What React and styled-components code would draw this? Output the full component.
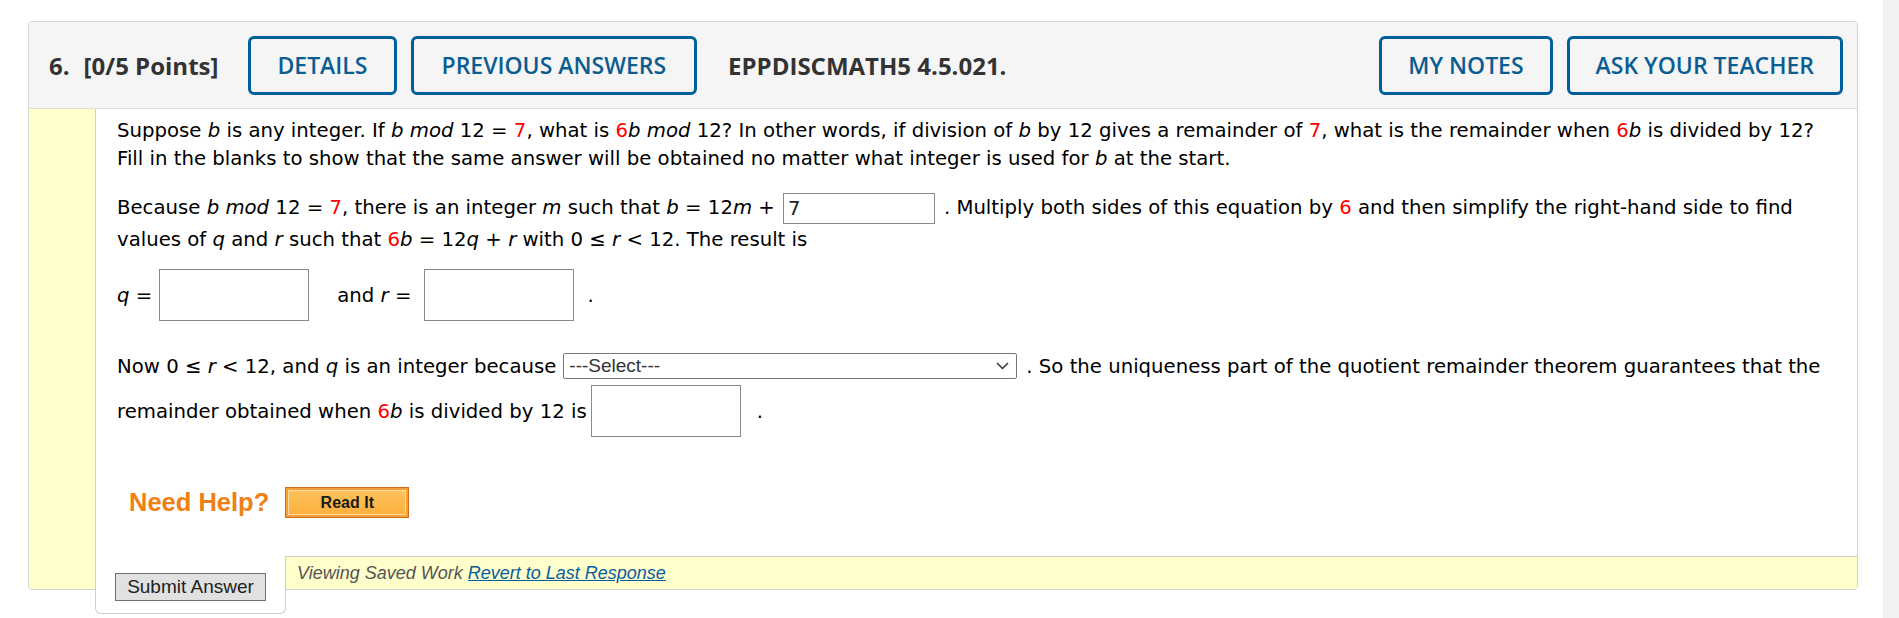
import React from "react";
import styled, { createGlobalStyle } from "styled-components";

const GlobalStyle = createGlobalStyle`
  html, body {
    margin: 0;
    padding: 0;
    background: #fff;
  }
  body {
    font-family: "DejaVu Sans", Verdana, sans-serif;
    color: #000;
  }
`;

const Page = styled.div`
  display: flex;
  height: 618px;
  overflow: hidden;
`;

const Content = styled.div`
  flex: 1;
  padding: 21px 25px 0 28px;
`;

const Track = styled.div`
  width: 16px;
  background: #f1f1f1;
`;

const Card = styled.div`
  border: 1px solid #d4d4d4;
  border-radius: 4px;
  background: #fff;
`;

/* header */
const Header = styled.div`
  display: flex;
  align-items: center;
  height: 86px;
  padding: 0 14px 0 20px;
  background: #f5f5f5;
  border-bottom: 1px solid #dcdcdc;
  border-radius: 4px 4px 0 0;
  font-family: "Open Sans", sans-serif;
`;

const QNum = styled.span`
  font-size: 24px;
  font-weight: 700;
  color: #333;
  margin-right: 14px;
`;

const Points = styled.span`
  font-size: 24px;
  font-weight: 700;
  color: #333;
  margin-right: 30px;
`;

const HeadButton = styled.button`
  height: 59px;
  padding: 0 ${(p) => p.px || 26}px;
  margin-right: ${(p) => p.gap || 0}px;
  border: 3px solid #00609b;
  border-radius: 6px;
  background: transparent;
  color: #0b5d91;
  font-family: "Open Sans", sans-serif;
  font-size: 23px;
  font-weight: 600;
  text-transform: uppercase;
`;

const Code = styled.span`
  margin-left: 31px;
  font-size: 24px;
  font-weight: 700;
  color: #333;
`;

const Spacer = styled.div`
  flex: 1;
`;

/* body */
const Body = styled.div`
  display: flex;
`;

const Strip = styled.div`
  width: 66px;
  background: #ffffcc;
  border-radius: 0 0 0 3px;
`;

const Main = styled.div`
  flex: 1;
  display: flex;
  flex-direction: column;
  border-left: 1px solid #cfcfcf;
  min-width: 0;
`;

const Question = styled.div`
  padding: 8px 0 0 21px;
  font-size: 19.7px;
`;

const Para = styled.div`
  line-height: ${(p) => p.lh}px;
  margin-top: ${(p) => p.mt || 0}px;
  white-space: nowrap;
`;

const Row = styled.div`
  display: flex;
  align-items: center;
  height: ${(p) => p.h}px;
  margin-top: ${(p) => p.mt || 0}px;
  white-space: pre;
`;

const Red = styled.span`
  color: #f00;
`;

const Var = styled.i``;

const Blank = styled.span`
  display: inline-block;
  vertical-align: middle;
  box-sizing: border-box;
  width: ${(p) => p.w}px;
  min-width: ${(p) => p.w}px;
  height: ${(p) => p.h}px;
  margin: 0 ${(p) => p.mr || 0}px 0 ${(p) => p.ml || 0}px;
  border: 1px solid #8a8a8a;
  background: #fff;
  padding: 0 4px;
  line-height: ${(p) => p.h - 2}px;
  color: #222;
`;

const SelectBox = styled.div`
  display: flex;
  align-items: center;
  justify-content: space-between;
  box-sizing: border-box;
  width: 454px;
  height: 26px;
  margin: 0 9px 0 7px;
  padding: 0 7px 0 5px;
  border: 1px solid #767676;
  border-radius: 2px;
  font-family: "Liberation Sans", Arial, sans-serif;
  font-size: 19px;
  color: #333;
`;

const HelpRow = styled.div`
  display: flex;
  align-items: center;
  height: 31px;
  margin: 50px 0 0 33px;
`;

const NeedHelp = styled.span`
  font-family: "Liberation Sans", Arial, sans-serif;
  font-size: 25.5px;
  font-weight: 700;
  color: #ee8014;
  margin-right: 16px;
`;

const ReadIt = styled.button`
  width: 124px;
  height: 31px;
  border: 1px solid #d06a16;
  background: #f4a038;
  padding: 2px;
  display: flex;
`;

const ReadItInner = styled.span`
  flex: 1;
  display: flex;
  align-items: center;
  justify-content: center;
  background: linear-gradient(#fdc25a, #fbb03f);
  border: 1px solid #fbd9a3;
  font-family: "Liberation Sans", Arial, sans-serif;
  font-size: 16px;
  font-weight: 700;
  color: #1a1a1a;
`;

const Footer = styled.div`
  display: flex;
  margin-top: 38px;
`;

const SubmitCell = styled.div`
  position: relative;
  z-index: 1;
  width: 191px;
  box-sizing: border-box;
  height: 58px;
  margin: 0 0 -25px -1px;
  padding: 17px 0 0 19px;
  background: #fff;
  border: 1px solid #cfcfcf;
  border-top: none;
  border-radius: 0 0 6px 6px;
`;

const SubmitButton = styled.button`
  width: 151px;
  height: 28px;
  padding: 0;
  border: 1px solid #707070;
  background: #e1e1e1;
  font-family: "Liberation Sans", Arial, sans-serif;
  font-size: 19px;
  color: #222;
`;

const SavedBar = styled.div`
  flex: 1;
  height: 32px;
  display: flex;
  align-items: center;
  padding-left: 11px;
  background: #ffffcc;
  border-top: 1px solid #cccccc;
  border-radius: 0 0 3px 0;
  font-family: "Liberation Sans", Arial, sans-serif;
  font-size: 18px;
  font-style: italic;
  color: #555;
  white-space: pre;
`;

const Revert = styled.a`
  color: #0a5c9e;
  text-decoration: underline;
`;

const Chevron = () => (
  <svg width="13" height="8" viewBox="0 0 13 8">
    <path d="M1 1l5.5 5.5L12 1" fill="none" stroke="#333" strokeWidth="1.5" />
  </svg>
);

export default function App() {
  return (
    <Page>
      <GlobalStyle />
      <Content>
        <Card>
          <Header>
            <QNum>6.</QNum>
            <Points>[0/5 Points]</Points>
            <HeadButton gap={14}>Details</HeadButton>
            <HeadButton px={28}>Previous Answers</HeadButton>
            <Code>EPPDISCMATH5 4.5.021.</Code>
            <Spacer />
            <HeadButton gap={14}>My Notes</HeadButton>
            <HeadButton>Ask Your Teacher</HeadButton>
          </Header>
          <Body>
            <Strip />
            <Main>
              <Question>
                <Para lh={28}>
                  Suppose <Var>b</Var> is any integer. If <Var>b mod</Var> 12 = <Red>7</Red>, what is{" "}
                  <Red>6</Red>
                  <Var>b mod</Var> 12? In other words, if division of <Var>b</Var> by 12 gives a
                  remainder of <Red>7</Red>, what is the remainder when <Red>6</Red>
                  <Var>b</Var> is divided by 12?
                  <br />
                  Fill in the blanks to show that the same answer will be obtained no matter what
                  integer is used for <Var>b</Var> at the start.
                </Para>
                <Para lh={32} mt={19}>
                  Because <Var>b mod</Var> 12 = <Red>7</Red>, there is an integer <Var>m</Var> such
                  that <Var>b</Var> = 12<Var>m</Var> +
                  <Blank w={152} h={31} ml={8} mr={9}>
                    7
                  </Blank>
                  . Multiply both sides of this equation by <Red>6</Red> and then simplify the
                  right-hand side to find
                  <br />
                  values of <Var>q</Var> and <Var>r</Var> such that <Red>6</Red>
                  <Var>b</Var> = 12<Var>q</Var> + <Var>r</Var> with 0 ≤ <Var>r</Var> &lt; 12. The
                  result is
                </Para>
                <Row h={52} mt={13}>
                  <Var>q</Var> =
                  <Blank w={150} h={52} ml={7} mr={28} />
                  and <Var>r</Var> =
                  <Blank w={150} h={52} ml={13} mr={13} />.
                </Row>
                <Row h={28} mt={31}>
                  Now 0 ≤ <Var>r</Var> &lt; 12, and <Var>q</Var> is an integer because
                  <SelectBox>
                    <span>---Select---</span>
                    <Chevron />
                  </SelectBox>
                  . So the uniqueness part of the quotient remainder theorem guarantees that the
                </Row>
                <Row h={52} mt={5}>
                  remainder obtained when <Red>6</Red>
                  <Var>b</Var> is divided by 12 is
                  <Blank w={150} h={52} ml={4} mr={16} />.
                </Row>
              </Question>
              <HelpRow>
                <NeedHelp>Need Help?</NeedHelp>
                <ReadIt>
                  <ReadItInner>Read It</ReadItInner>
                </ReadIt>
              </HelpRow>
              <Footer>
                <SubmitCell>
                  <SubmitButton>Submit Answer</SubmitButton>
                </SubmitCell>
                <SavedBar>
                  Viewing Saved Work <Revert href="#">Revert to Last Response</Revert>
                </SavedBar>
              </Footer>
            </Main>
          </Body>
        </Card>
      </Content>
      <Track />
    </Page>
  );
}
